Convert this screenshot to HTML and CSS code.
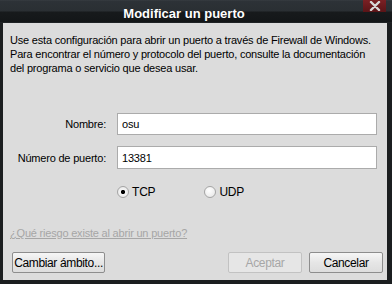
FILE: index.html
```html
<!DOCTYPE html>
<html lang="es">
<head>
    <meta charset="UTF-8">
    <title>Modificar un puerto</title>
    <link rel="stylesheet" href="styles.css">
</head>
<body>
    <div class="window">
        <div class="titlebar">
            <span class="title">Modificar un puerto</span>
            <button class="close" aria-label="Cerrar">
                <svg width="12" height="10" viewBox="0 0 12 10">
                    <path d="M2 1 L10 9 M10 1 L2 9" stroke="#d8d8d8" stroke-width="2.4" stroke-linecap="round"/>
                </svg>
            </button>
        </div>

        <div class="content">
            <p class="intro">Use esta configuración para abrir un puerto a través de Firewall de Windows.<br>
            Para encontrar el número y protocolo del puerto, consulte la documentación<br>
            del programa o servicio que desea usar.</p>

            <div class="form">
                <label for="nombre">Nombre:</label>
                <input type="text" id="nombre" value="osu">
                <label for="puerto">Número de puerto:</label>
                <input type="text" id="puerto" value="13381">
                <div class="protocols">
                    <span class="radio checked">TCP</span>
                    <span class="radio">UDP</span>
                </div>
            </div>

            <a class="help" href="#">¿Qué riesgo existe al abrir un puerto?</a>

            <div class="actions">
                <button class="btn">Cambiar ámbito...</button>
                <div class="right">
                    <button class="btn small" disabled>Aceptar</button>
                    <button class="btn small">Cancelar</button>
                </div>
            </div>
        </div>
    </div>
</body>
</html>
```

FILE: styles.css
```css
body {
    margin: 0;
    background: #1b1e20;
    font-family: "Liberation Sans", Arial, sans-serif;
    font-size: 11px;
    letter-spacing: -0.2px;
    color: #000;
}
.window {
    width: 392px;
    height: 284px;
    display: flex;
    flex-direction: column;
    background: #1b1e20;
}
.titlebar {
    height: 23px;
    position: relative;
    background: linear-gradient(#3a3f44 0px, #2d3237 1px, #2a2f33 11px, #171a1c 12px, #131618 22px, #2a2e31 23px);
    display: flex;
    align-items: center;
    justify-content: center;
    padding-right: 24px;
}
.title {
    color: #fff;
    font-weight: bold;
    font-size: 13px;
    letter-spacing: 0;
    margin-top: 3px;
}
.close {
    position: absolute;
    top: 0;
    right: 6px;
    width: 23px;
    height: 12px;
    padding: 0;
    border: none;
    background: linear-gradient(#7a2024, #5a1417);
    display: flex;
    align-items: center;
    justify-content: center;
}
.content {
    flex: 1;
    margin: 0 5px 4px 3px;
    background: #dcdcdc;
    padding: 10px 8px 0 7px;
    display: flex;
    flex-direction: column;
}
.intro {
    margin: 0;
    line-height: 14px;
    white-space: nowrap;
}
.form {
    display: grid;
    grid-template-columns: 96px 260px;
    column-gap: 11px;
    row-gap: 11px;
    align-items: center;
    margin-top: 38px;
}
.form label {
    text-align: right;
    white-space: nowrap;
}
.form input {
    height: 22px;
    box-sizing: border-box;
    border: 1px solid #ababab;
    background: #fff;
    font-family: inherit;
    font-size: 11px;
    letter-spacing: -0.2px;
    padding: 0 4px;
    margin: 0;
}
#puerto {
    height: 23px;
}
.protocols {
    grid-column: 2;
    display: flex;
    gap: 49px;
    margin-top: 5px;
}
.radio {
    display: flex;
    align-items: center;
    gap: 3px;
    font-size: 12px;
}
.radio::before {
    content: "";
    width: 10px;
    height: 10px;
    border: 1px solid #a4a4a4;
    border-radius: 50%;
    background: radial-gradient(circle at 40% 35%, #ffffff, #e4e4e4);
}
.radio.checked::before {
    background: radial-gradient(circle, #000 0, #000 1.8px, #f4f4f4 2.4px, #e4e4e4);
}
.help {
    margin-top: 28px;
    color: #a6a6a6;
    text-decoration: underline;
    align-self: flex-start;
}
.actions {
    display: flex;
    justify-content: space-between;
    margin-top: 13px;
    margin-right: -4px;
    padding-left: 2px;
}
.right {
    display: flex;
    gap: 7px;
}
.btn {
    height: 21px;
    width: 93px;
    padding: 0;
    border: 1px solid #8d8d8d;
    border-radius: 2px;
    background: linear-gradient(#f6f6f6, #e6e6e6 50%, #dddddd);
    font-family: inherit;
    font-size: 12px;
    letter-spacing: -0.35px;
    white-space: nowrap;
    color: #000;
}
.btn.small {
    width: 74px;
}
.btn:disabled {
    border-color: #c2c2c2;
    background: #e6e6e6;
    color: #a6a6a6;
}
```
